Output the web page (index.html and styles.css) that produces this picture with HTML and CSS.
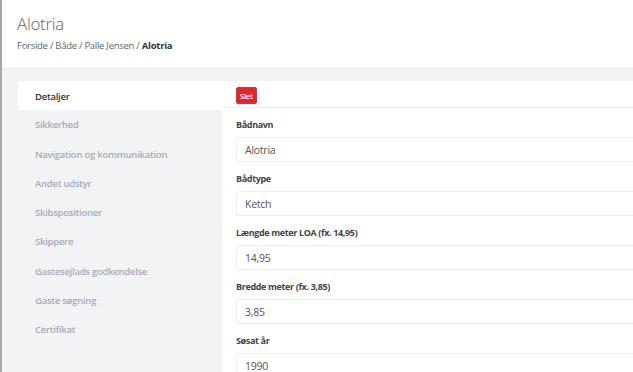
FILE: index.html
```html
<!DOCTYPE html>
<html lang="da">
<head>
    <meta charset="UTF-8">
    <meta name="viewport" content="width=device-width, initial-scale=1.0">
    <title>Alotria</title>
    <link rel="stylesheet" href="styles.css">
</head>
<body>
    <div class="page">
        <div class="page-header">
            <h1>Alotria</h1>
            <div class="breadcrumb">Forside / Både / Palle Jensen / <b>Alotria</b></div>
        </div>
        <div class="main">
            <ul class="side-nav">
                <li class="active">Detaljer</li>
                <li>Sikkerhed</li>
                <li>Navigation og kommunikation</li>
                <li>Andet udstyr</li>
                <li>Skibspositioner</li>
                <li>Skippere</li>
                <li>Gastesejlads godkendelse</li>
                <li>Gaste søgning</li>
                <li>Certifikat</li>
            </ul>
            <div class="panel">
                <div class="panel-top">
                    <button class="btn-delete">Slet</button>
                </div>
                <form class="boat-form">
                    <div class="field">
                        <label>Bådnavn</label>
                        <input type="text" value="Alotria">
                    </div>
                    <div class="field">
                        <label>Bådtype</label>
                        <input type="text" value="Ketch">
                    </div>
                    <div class="field">
                        <label>Længde meter LOA (fx. 14,95)</label>
                        <input type="text" value="14,95">
                    </div>
                    <div class="field">
                        <label>Bredde meter (fx. 3,85)</label>
                        <input type="text" value="3,85">
                    </div>
                    <div class="field">
                        <label>Søsat år</label>
                        <input type="text" value="1990">
                    </div>
                </form>
            </div>
        </div>
    </div>
</body>
</html>
```

FILE: styles.css
```css
body, html {
    margin: 0;
    padding: 0;
    font-family: "Open Sans", sans-serif;
    background-color: #f2f3f5;
    overflow: hidden;
}
.page {
    border-left: 2px solid #a8a8a8;
    min-height: 100vh;
}
.page-header {
    background-color: white;
    height: 67px;
    box-sizing: border-box;
    padding: 12px 15px 0;
}
h1 {
    margin: 0;
    font-size: 17px;
    letter-spacing: -0.3px;
    line-height: 24px;
    font-weight: 300;
    color: #666;
}
.breadcrumb {
    margin-top: 3px;
    font-size: 9.5px;
    letter-spacing: -0.27px;
    line-height: 14px;
    color: #666;
}
.breadcrumb b {
    color: #333;
}
.main {
    display: grid;
    grid-template-columns: 204px 520px;
    padding: 14px 0 0 16px;
    background-color: #f2f3f5;
    min-height: 305px;
}
.side-nav {
    list-style: none;
    margin: 0;
    padding: 0;
}
.side-nav li {
    padding: 6px 17px;
    line-height: 17.25px;
    font-size: 9.5px;
    letter-spacing: -0.25px;
    font-weight: 600;
    color: #a7aab9;
}
.side-nav li:first-child {
    padding-top: 7px;
    padding-bottom: 5px;
}
.side-nav li.active {
    background-color: white;
    color: #333;
}
.panel {
    background-color: white;
}
.panel-top {
    height: 27px;
    box-sizing: border-box;
    border-bottom: 1px solid #eee;
    padding: 6px 14px 0;
}
.btn-delete {
    display: block;
    height: 17px;
    padding: 0 3px;
    font-family: "Open Sans", sans-serif;
    font-size: 7.5px;
    letter-spacing: -0.2px;
    font-weight: 600;
    color: white;
    background-color: #e5252a;
    border: 1px solid #a94455;
    border-radius: 2px;
}
.boat-form {
    padding: 10px 14px 0;
}
.field {
    margin-bottom: 10px;
}
.field label {
    display: block;
    font-size: 9px;
    letter-spacing: -0.35px;
    line-height: 14px;
    font-weight: 700;
    color: #444;
    margin-bottom: 5px;
}
.field input {
    display: block;
    width: 100%;
    box-sizing: border-box;
    height: 25px;
    padding: 0 8px;
    font-family: "Open Sans", sans-serif;
    font-size: 10.5px;
    letter-spacing: -0.25px;
    color: #555;
    border: 1px solid #eee;
    border-radius: 2px;
    outline: none;
}
```
